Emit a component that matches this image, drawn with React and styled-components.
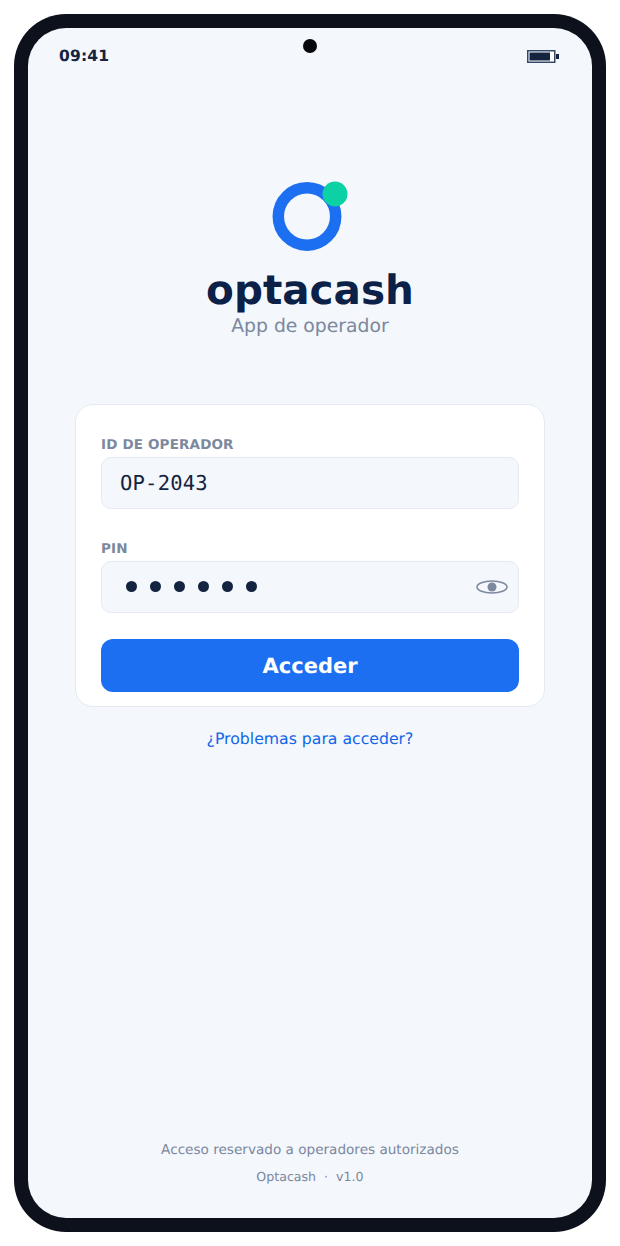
import React from "react";
import styled, { createGlobalStyle } from "styled-components";

const Global = createGlobalStyle`
  html, body { margin: 0; padding: 0; background: #fff; }
  body { font-family: "DejaVu Sans", sans-serif; text-rendering: geometricPrecision; }
  * { box-sizing: border-box; }
`;
const Page = styled.div`
  width: 620px; height: 1246px; padding: 14px; background: #fff;
`;
const Phone = styled.div`
  width: 592px; height: 1218px; padding: 14px; background: #0c111b; border-radius: 52px;
`;
const Screen = styled.main`
  position: relative; width: 564px; height: 1190px; background: #f4f7fc; border-radius: 38px;
  display: flex; flex-direction: column; align-items: center;
`;
const Camera = styled.div`
  position: absolute; left: 275px; top: 11px; width: 14px; height: 14px; border-radius: 50%; background: #05070b;
`;
const StatusBar = styled.div`
  width: 100%; height: 57px; padding: 18px 32px 0 31px;
  display: flex; justify-content: space-between; align-items: flex-start;
`;
const Time = styled.span`
  font-size: 15.5px; line-height: 20px; font-weight: 700; color: #14233f; letter-spacing: .2px;
`;
const Battery = styled.svg`
  display: block; margin-top: 4px;
`;
const Logo = styled.svg`
  display: block; margin-top: 96px;
`;
const Brand = styled.h1`
  margin: 12px 0 0; font-size: 40.5px; line-height: 52px; font-weight: 700; color: #0b2147;
`;
const Sub = styled.p`
  margin: -1px 0 0; font-size: 18.8px; line-height: 24px; color: #7b889e;
`;
const Card = styled.form`
  margin-top: 65px; width: 470px; height: 303px; padding: 32px 25px 0;
  background: #fff; border: 1.5px solid #e5eaf2; border-radius: 18px;
`;
const Label = styled.label`
  display: block; font-size: 13.5px; line-height: 16px; font-weight: 700; color: #7b889e; letter-spacing: .15px; margin-bottom: 4px;
`;
const Field = styled.div`
  height: 52px; margin-bottom: ${p => p.$gap}px; padding: 0 18px;
  display: flex; align-items: center; justify-content: space-between;
  background: #f4f7fc; border: 1.5px solid #e5eaf2; border-radius: 10px;
`;
const Code = styled.span`
  font-family: "DejaVu Sans Mono", monospace; font-size: 20.5px; color: #14233f; letter-spacing: .2px;
`;
const Dots = styled.div`
  display: flex; gap: 13px; padding: 0 0 1px 6px;
`;
const Dot = styled.span`
  width: 11px; height: 11px; border-radius: 50%; background: #14233f;
`;
const Eye = styled.svg`
  display: block; margin: 0 -8px 1px 0;
`;
const Submit = styled.button`
  display: block; width: 100%; height: 53px; border: 0; border-radius: 12px; padding: 0;
  background: #1d6ff2; color: #fff; font: 700 21px "DejaVu Sans", sans-serif; text-rendering: geometricPrecision;
`;
const Help = styled.a`
  margin-top: 22px; font-size: 15.7px; line-height: 20px; color: #1166e8;
`;
const Footer = styled.footer`
  margin-top: auto; padding-bottom: 33px; text-align: center; color: #7b889e;
`;
const Note = styled.p`
  margin: 0 0 9px; font-size: 13.6px; line-height: 17px;
`;
const Version = styled.p`
  margin: 0; font-size: 12.6px; line-height: 17px; white-space: pre;
`;

export default function App() {
  return (
    <Page>
      <Global />
      <Phone>
        <Screen>
          <Camera />
          <StatusBar>
            <Time>09:41</Time>
            <Battery width="33" height="13" viewBox="0 0 33 13">
              <rect x=".75" y=".75" width="27" height="11.5" fill="#fff" stroke="#33486b" strokeWidth="1.5" />
              <rect x="2.5" y="2.5" width="20.5" height="8" fill="#14233f" />
              <rect x="29" y="4" width="3" height="5" fill="#14233f" />
            </Battery>
          </StatusBar>
          <Logo width="76" height="71" viewBox="0 0 76 71">
            <circle cx="35" cy="35.5" r="28.7" fill="none" stroke="#1d6ff2" strokeWidth="11.5" />
            <circle cx="63" cy="13" r="12.5" fill="#0bd1a4" />
          </Logo>
          <Brand>optacash</Brand>
          <Sub>App de operador</Sub>
          <Card>
            <Label>ID DE OPERADOR</Label>
            <Field $gap={32}><Code>OP-2043</Code></Field>
            <Label>PIN</Label>
            <Field $gap={26}>
              <Dots>{[0,1,2,3,4,5].map(i => <Dot key={i} />)}</Dots>
              <Eye width="32" height="14" viewBox="0 0 32 14">
                <ellipse cx="16" cy="7" rx="15" ry="6" fill="none" stroke="#7b889e" strokeWidth="1.5" />
                <circle cx="16" cy="7" r="4.5" fill="#7b889e" />
              </Eye>
            </Field>
            <Submit type="button">Acceder</Submit>
          </Card>
          <Help>¿Problemas para acceder?</Help>
          <Footer>
            <Note>Acceso reservado a operadores autorizados</Note>
            <Version>Optacash  ·  v1.0</Version>
          </Footer>
        </Screen>
      </Phone>
    </Page>
  );
}
